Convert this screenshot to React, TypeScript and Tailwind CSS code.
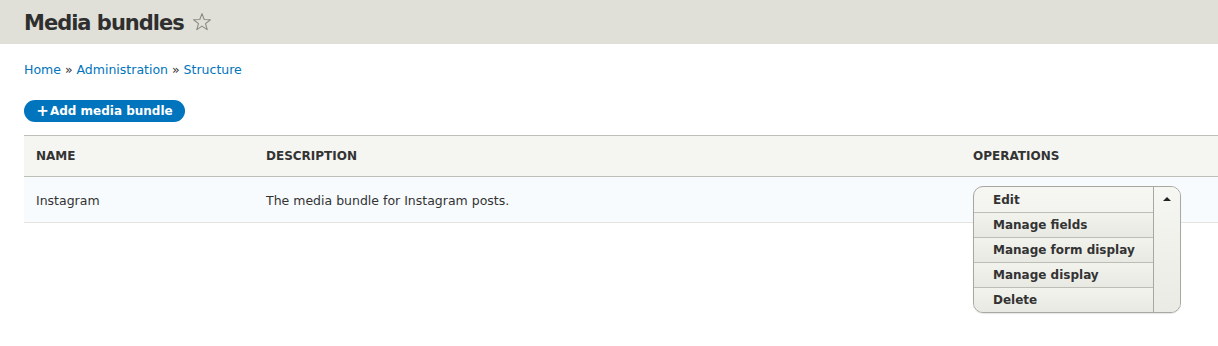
import React from 'react';

const font = "font-['DejaVu_Sans',Verdana,sans-serif]";

const operations = ['Edit', 'Manage fields', 'Manage form display', 'Manage display', 'Delete'];

const StarIcon: React.FC = () => (
  <svg width="20" height="20" viewBox="0 0 20 20" className="ml-[8px] mt-[2px]">
    <path
      d="M10 1.6 L12.2 7.5 L18.4 7.7 L13.5 11.6 L15.2 17.6 L10 14.1 L4.8 17.6 L6.5 11.6 L1.6 7.7 L7.8 7.5 Z"
      fill="none"
      stroke="#8a8a80"
      strokeWidth="1.1"
      strokeLinejoin="round"
    />
  </svg>
);

const DropButton: React.FC = () => {
  return (
    <div className="flex w-[208px] overflow-hidden rounded-[10px] border border-[#a8a8a0] bg-gradient-to-b from-[#f6f6f3] to-[#e8e8e2] shadow-[0_1px_1px_rgba(0,0,0,0.1)]">
      <ul className="flex flex-1 flex-col">
        {operations.map((op, index) => (
          <li
            key={op}
            className={`flex h-[25px] items-center pl-[19px] text-[12px] font-bold text-[#333] ${
              index > 0 ? 'border-t border-[#bdbdb5] bg-gradient-to-b from-[#f3f3ee] to-[#e9e9e3]' : ''
            }`}
          >
            {op}
          </li>
        ))}
      </ul>
      <div className="flex w-[27px] justify-center border-l border-[#a8a8a0] bg-gradient-to-b from-[#f6f6f2] to-[#ebebe5] pt-[10px]">
        <span className="h-0 w-0 border-x-[4px] border-b-[4px] border-x-transparent border-b-[#222]" />
      </div>
    </div>
  );
};

export default function App() {
  return (
    <div className={`${font} min-h-[346px] w-[1218px] overflow-hidden bg-white text-[#333]`}>
      <header className="flex h-[44px] items-start bg-[#e0e0d8] pl-[24px] pt-[10px]">
        <h1 className="text-[21px] leading-[26px] font-bold tracking-[-1px] text-[#2f2f2f]">Media bundles</h1>
        <StarIcon />
      </header>

      <div className="pl-[24px]">
        <nav className="mt-[18px] text-[12.5px] leading-[16px] text-[#0074bd]">
          <a>Home</a>
          <span className="text-[#333]"> » </span>
          <a>Administration</a>
          <span className="text-[#333]"> » </span>
          <a>Structure</a>
        </nav>

        <button className="mt-[22px] flex h-[22px] w-[161px] items-center justify-center rounded-full bg-[#0074bd] text-[12px] font-bold text-white">
          <span className="mr-[1px] text-[15px] leading-none">+</span>Add media bundle
        </button>

        <table className="mt-[13px] w-[1194px] border-collapse text-left">
          <thead>
            <tr className="h-[41px] border-y border-[#bfbfba] bg-[#f5f5f2]">
              <th className="w-[230px] pl-[12px] text-[12px] font-bold text-[#333]">NAME</th>
              <th className="w-[707px] pl-[12px] text-[12px] font-bold text-[#333]">DESCRIPTION</th>
              <th className="pl-[12px] text-[12px] font-bold text-[#333]">OPERATIONS</th>
            </tr>
          </thead>
          <tbody>
            <tr className="h-[46px] border-b border-[#e6e4df] bg-[#f7fbfe] align-top">
              <td className="pl-[12px] pt-[15px] text-[12.5px]">Instagram</td>
              <td className="pl-[12px] pt-[15px] text-[12.5px]">The media bundle for Instagram posts.</td>
              <td className="relative pl-[12px]">
                <div className="absolute left-[12px] top-[9px]">
                  <DropButton />
                </div>
              </td>
            </tr>
          </tbody>
        </table>
      </div>
    </div>
  );
}
